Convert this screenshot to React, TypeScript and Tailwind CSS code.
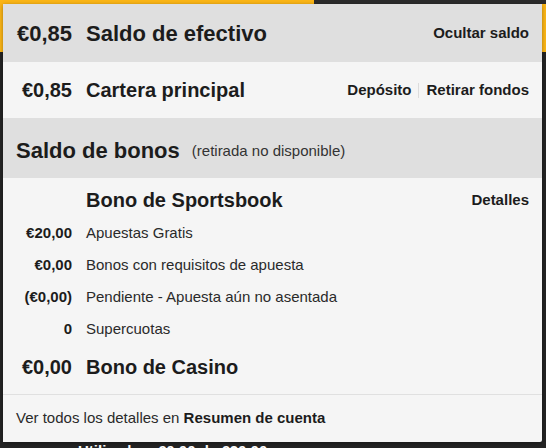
const bonusLines = [
  { amount: '€20,00', label: 'Apuestas Gratis' },
  { amount: '€0,00', label: 'Bonos con requisitos de apuesta' },
  { amount: '(€0,00)', label: 'Pendiente - Apuesta aún no asentada' },
  { amount: '0', label: 'Supercuotas' },
]

export default function App() {
  return (
    <div className="relative h-[448px] w-[546px] overflow-hidden bg-[#242424] font-['Liberation_Sans',Arial,sans-serif] text-[#1c1c1c]">
      {/* fondo de la página */}
      <div className="absolute left-0 top-0 h-[52px] w-full bg-[#fbb516]" />
      <div className="absolute left-[314px] top-0 h-[4px] w-[232px] bg-[#2b2b2b]" />
      <div className="absolute left-[78px] top-[440px] text-[15px] font-bold text-white">Utilizados: €0,00 de €20,00</div>

      {/* panel de saldo */}
      <div className="relative ml-[3px] mt-[4px] flex h-[438px] w-[539px] flex-col rounded-br-[2px] bg-[#f5f5f5] shadow-[0_1px_4px_rgba(0,0,0,0.35)]">
        <div className="flex h-[58px] items-center bg-[#dfdfdf] px-[13px]">
          <span className="w-[56px] text-right text-[22px] font-bold">€0,85</span>
          <span className="ml-[14px] text-[22px] font-bold">Saldo de efectivo</span>
          <span className="ml-auto text-[15px] font-bold">Ocultar saldo</span>
        </div>

        <div className="flex h-[56px] items-center px-[13px]">
          <span className="w-[56px] text-right text-[20px] font-bold">€0,85</span>
          <span className="ml-[14px] text-[20px] font-bold">Cartera principal</span>
          <div className="ml-auto flex items-center gap-[7px] text-[15px] font-bold">
            <span>Depósito</span>
            <span className="h-[15px] w-px bg-[#dcdcdc]" />
            <span>Retirar fondos</span>
          </div>
        </div>

        <div className="flex h-[60px] items-center gap-[12px] bg-[#dfdfdf] px-[13px] pt-[4px]">
          <span className="text-[22px] font-bold">Saldo de bonos</span>
          <span className="pt-[3px] text-[15px] text-[#333]">(retirada no disponible)</span>
        </div>

        <div className="flex flex-col px-[13px] pt-[5px]">
          <div className="flex h-[34px] items-center">
            <span className="w-[56px]" />
            <span className="ml-[14px] text-[20px] font-bold">Bono de Sportsbook</span>
            <span className="ml-auto text-[15px] font-bold">Detalles</span>
          </div>
          {bonusLines.map((line) => (
            <div key={line.label} className="flex h-[32px] items-center text-[15px]">
              <span className="w-[56px] text-right font-bold">{line.amount}</span>
              <span className="ml-[14px] text-[#2a2a2a]">{line.label}</span>
            </div>
          ))}
          <div className="flex h-[44px] items-center">
            <span className="w-[56px] text-right text-[20px] font-bold">€0,00</span>
            <span className="ml-[14px] text-[20px] font-bold">Bono de Casino</span>
          </div>
        </div>

        <div className="mt-[5px] flex flex-1 items-center border-t border-[#e0e0e0] px-[13px] text-[15px] text-[#2a2a2a]">
          <span>
            Ver todos los detalles en <span className="font-bold text-[#1c1c1c]">Resumen de cuenta</span>
          </span>
        </div>
      </div>
    </div>
  )
}
